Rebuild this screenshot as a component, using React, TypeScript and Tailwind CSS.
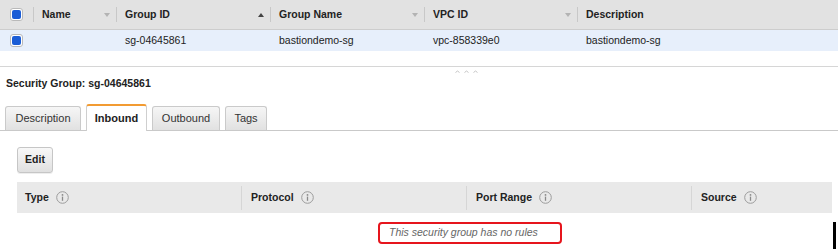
import React from 'react';

// ── Security group detail: list row + inbound rules pane ──────────────────────

type Col = { label: string; arrow?: 'up' | 'down' };

const listCols: Col[] = [
  { label: 'Name', arrow: 'down' },
  { label: 'Group ID', arrow: 'up' },
  { label: 'Group Name', arrow: 'down' },
  { label: 'VPC ID', arrow: 'down' },
  { label: 'Description' },
];

const row = ['', 'sg-04645861', 'bastiondemo-sg', 'vpc-858339e0', 'bastiondemo-sg'];

function Checkbox() {
  return (
    <div className="ml-[10px] h-[13px] w-[13px] rounded-[3px] border border-[#b9b9b9] bg-white p-[1px] shadow-[inset_0_1px_0_#fff]">
      <div className="h-full w-full rounded-[2px] bg-[#1b5dd6]" />
    </div>
  );
}

function SortArrow({ dir }: { dir: 'up' | 'down' }) {
  return (
    <svg width="6" height="4" viewBox="0 0 6 4" className="ml-auto mr-[6px] shrink-0">
      {dir === 'up' ? (
        <path d="M0 4 L3 0 L6 4 Z" fill="#444" />
      ) : (
        <path d="M0 0 L3 4 L6 0 Z" fill="#b3b3b3" />
      )}
    </svg>
  );
}

function InfoIcon() {
  return (
    <svg width="13" height="13" viewBox="0 0 13 13" className="ml-[7px] shrink-0">
      <circle cx="6.5" cy="6.5" r="5.8" fill="none" stroke="#9c9c9c" strokeWidth="1" />
      <circle cx="6.5" cy="3.9" r="0.9" fill="#8a8a8a" />
      <path d="M6.5 5.6 V9.8" stroke="#8a8a8a" strokeWidth="1.3" />
    </svg>
  );
}

const tabs = [
  { label: 'Description', w: 'w-[76px]' },
  { label: 'Inbound', w: 'w-[61px]', active: true },
  { label: 'Outbound', w: 'w-[68px]' },
  { label: 'Tags', w: 'w-[42px]' },
];

const ruleCols = [
  { label: 'Type', w: 'w-[224px]' },
  { label: 'Protocol', w: 'w-[225px]' },
  { label: 'Port Range', w: 'w-[225px]' },
  { label: 'Source', w: 'flex-1' },
];

export default function App() {
  return (
    <div className="h-[250px] w-[838px] overflow-hidden bg-white font-['Liberation_Sans',Arial,sans-serif] text-[10.5px] text-[#222]">
      {/* list header */}
      <div className="grid h-[30px] grid-cols-[33px_83px_154px_154px_153px_1fr] border-b border-[#cdcdcd] bg-[#e2e2e2] font-bold">
        <div className="flex items-center">
          <Checkbox />
        </div>
        {listCols.map((c) => (
          <div key={c.label} className="flex items-center">
            <div className="h-[15px] w-px shrink-0 bg-[#c8c8c8]" />
            <span className="ml-2 whitespace-nowrap">{c.label}</span>
            {c.arrow && <SortArrow dir={c.arrow} />}
          </div>
        ))}
      </div>

      {/* selected row */}
      <div className="grid h-[21px] grid-cols-[33px_83px_154px_154px_153px_1fr] bg-[#e7effb]">
        <div className="flex items-center">
          <Checkbox />
        </div>
        {row.map((v, i) => (
          <div key={i} className="flex items-center whitespace-nowrap pl-[9px]">
            {v}
          </div>
        ))}
      </div>

      <div className="h-[15px]" />
      <div className="h-px bg-[#d6d6d6]" />

      {/* splitter grip */}
      <div className="flex h-[9px] items-center gap-[4px] pl-[455px]">
        {[0, 1, 2].map((i) => (
          <svg key={i} width="5" height="3" viewBox="0 0 5 3">
            <path d="M0.5 2.5 Q2.5 -0.5 4.5 2.5" fill="none" stroke="#c4c4c4" strokeWidth="1" />
          </svg>
        ))}
      </div>

      <div className="h-[14px] pl-[6px] font-bold leading-[14px]">Security Group: sg-04645861</div>
      <div className="h-[14px]" />

      {/* tabs */}
      <div className="flex h-[27px] items-end gap-[5px] border-b border-[#c9c9c9] pl-[5px] text-[11px]">
        {tabs.map((t) =>
          t.active ? (
            <div
              key={t.label}
              className={`${t.w} -mb-px flex h-[27px] items-center justify-center rounded-t-[3px] border-x border-t-2 border-[#cfcfcf] border-t-[#f29b32] bg-white font-bold`}
            >
              {t.label}
            </div>
          ) : (
            <div
              key={t.label}
              className={`${t.w} flex h-[24px] items-center justify-center rounded-t-[3px] border-x border-t border-[#cacaca] bg-gradient-to-b from-[#f6f6f6] to-[#e1e1e1] text-[#333]`}
            >
              {t.label}
            </div>
          ),
        )}
      </div>

      {/* actions */}
      <div className="pl-[17px] pt-[16px]">
        <button className="flex h-[26px] w-[36px] items-center justify-center rounded-[3px] border border-[#c6c6c6] bg-gradient-to-b from-[#f8f8f8] to-[#e0e0e0] font-bold text-[#222] shadow-[0_1px_0_#eee]">
          Edit
        </button>
      </div>

      {/* rules table */}
      <div className="ml-[17px] mt-[9px] flex h-[31px] w-[815px] bg-[#e9e9e9] font-bold">
        {ruleCols.map((c, i) => (
          <div key={c.label} className={`${c.w} flex items-center`}>
            {i > 0 && <div className="h-[24px] w-px shrink-0 bg-[#d6d6d6]" />}
            <span className={i > 0 ? 'ml-[9px]' : 'ml-[8px]'}>{c.label}</span>
            <InfoIcon />
          </div>
        ))}
      </div>

      <div className="mt-[9px] flex items-start">
        <div className="ml-[378px] flex h-[22px] w-[184px] items-center rounded-[4px] border-2 border-[#e6151d] pl-[9px] italic text-[#666]">
          This security group has no rules
        </div>
        <div className="ml-[271px] h-[27px] w-[3px] bg-black" />
      </div>
    </div>
  );
}
